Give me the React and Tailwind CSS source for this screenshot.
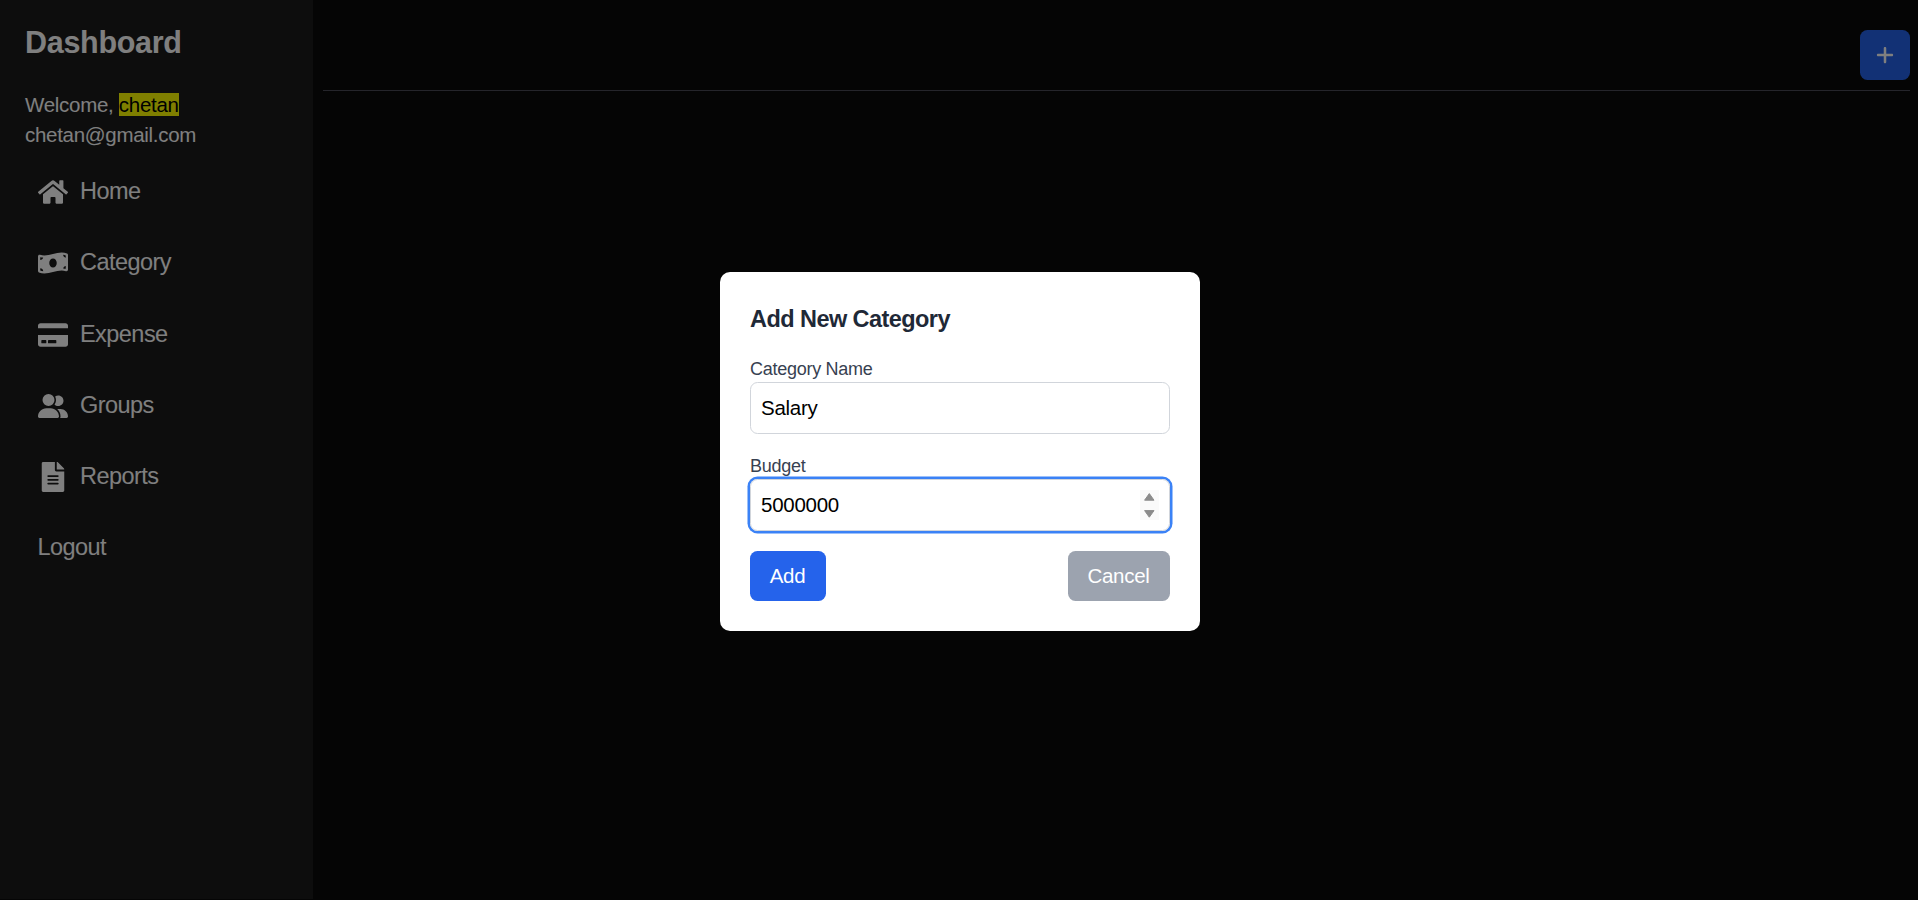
import React from "react";
import { FaHome, FaMoneyBillWave, FaCreditCard, FaFileAlt } from "react-icons/fa";
import { FaUserGroup, FaPlus } from "react-icons/fa6";

const NAV_ITEMS = [
  { label: "Home", icon: FaHome },
  { label: "Category", icon: FaMoneyBillWave },
  { label: "Expense", icon: FaCreditCard },
  { label: "Groups", icon: FaUserGroup },
  { label: "Reports", icon: FaFileAlt },
];

function Sidebar() {
  return (
    <aside className="flex h-[899px] w-[313px] shrink-0 flex-col bg-[#1a1a1a] px-[25px] pt-[22px] text-white">
      <h1 className="text-[30.5px] font-bold leading-[40px] tracking-[-0.3px]">Dashboard</h1>
      <div className="mt-[28px] text-[20.5px] leading-[30px] tracking-[-0.29px]">
        <p>
          Welcome, <mark className="bg-[#ffff00] text-black">chetan</mark>
        </p>
        <p>chetan@gmail.com</p>
      </div>
      <nav className="mt-[6.4px] flex flex-col">
        {NAV_ITEMS.map(({ label, icon: Icon }) => (
          <a key={label} className="flex h-[71.25px] items-center gap-[12px] pl-[13px] text-[23.5px] leading-[35px] tracking-[-0.55px]">
            <Icon className="size-[30px]" />
            <span className="pb-px">{label}</span>
          </a>
        ))}
        <button className="flex h-[71.25px] items-center pb-px pl-[12.5px] text-[23.5px] leading-[35px] tracking-[-0.55px]">
          Logout
        </button>
      </nav>
    </aside>
  );
}

function Header() {
  return (
    <header className="flex h-[91px] items-start justify-end border-b border-[#4b4b56] pt-[30px]">
      <button className="flex size-[50px] items-center justify-center rounded-[7.5px] bg-[#2563eb] text-white">
        <FaPlus className="size-5" />
      </button>
    </header>
  );
}

function Spinner() {
  return (
    <span className="flex h-[30px] w-[19px] items-center justify-center bg-[#fafafa]">
      <svg viewBox="0 0 19 30" className="h-[30px] w-[19px]" fill="#8b8b8b" stroke="#8b8b8b" strokeLinejoin="round">
        <path d="M9.3 3.6L14 10.2H4.6Z" />
        <path d="M9.3 27.2L14 20.6H4.6Z" />
      </svg>
    </span>
  );
}

function CategoryDialog() {
  return (
    <div className="w-[480px] rounded-[10px] bg-white p-[30px]">
      <h2 className="mb-5 pb-px text-[23.5px] font-bold leading-[34px] tracking-[-0.56px] text-[#1f2937]">
        Add New Category
      </h2>
      <label className="block text-[18px] leading-[25px] tracking-[-0.27px] text-[#374151]">Category Name</label>
      <div className="mb-5 flex h-[52px] items-center rounded-[7.5px] border border-[#d1d5db] px-[10px]">
        <input
          className="min-w-0 flex-1 text-[20.5px] leading-[30px] tracking-[-0.27px] text-black outline-none"
          defaultValue="Salary"
        />
      </div>
      <label className="block text-[18px] leading-[25px] tracking-[-0.27px] text-[#374151]">Budget</label>
      <div className="mb-5 flex h-[52px] items-center rounded-[7.5px] border border-[#d1d5db] px-[10px] ring-[2.5px] ring-[#3b82f6]">
        <input
          className="min-w-0 flex-1 text-[20.5px] leading-[30px] tracking-[-0.27px] text-black outline-none"
          defaultValue="5000000"
        />
        <Spinner />
      </div>
      <div className="flex justify-between text-[20.5px] leading-[30px] tracking-[-0.3px] text-white">
        <button className="h-[50px] w-[76px] rounded-[7.5px] bg-[#2563eb] pr-px">Add</button>
        <button className="h-[50px] w-[102px] rounded-[7.5px] bg-[#9ca3af] pr-px">Cancel</button>
      </div>
    </div>
  );
}

export default function App() {
  return (
    <div className="relative flex h-[900px] w-full overflow-hidden bg-[#0a0a0a] font-['Liberation_Sans',Arial,sans-serif]">
      <Sidebar />
      <main className="flex-1 pl-[10px] pr-2">
        <Header />
      </main>
      <div className="absolute inset-0 flex items-center justify-center bg-black/50 pl-[2px] pt-[3px]">
        <CategoryDialog />
      </div>
    </div>
  );
}
